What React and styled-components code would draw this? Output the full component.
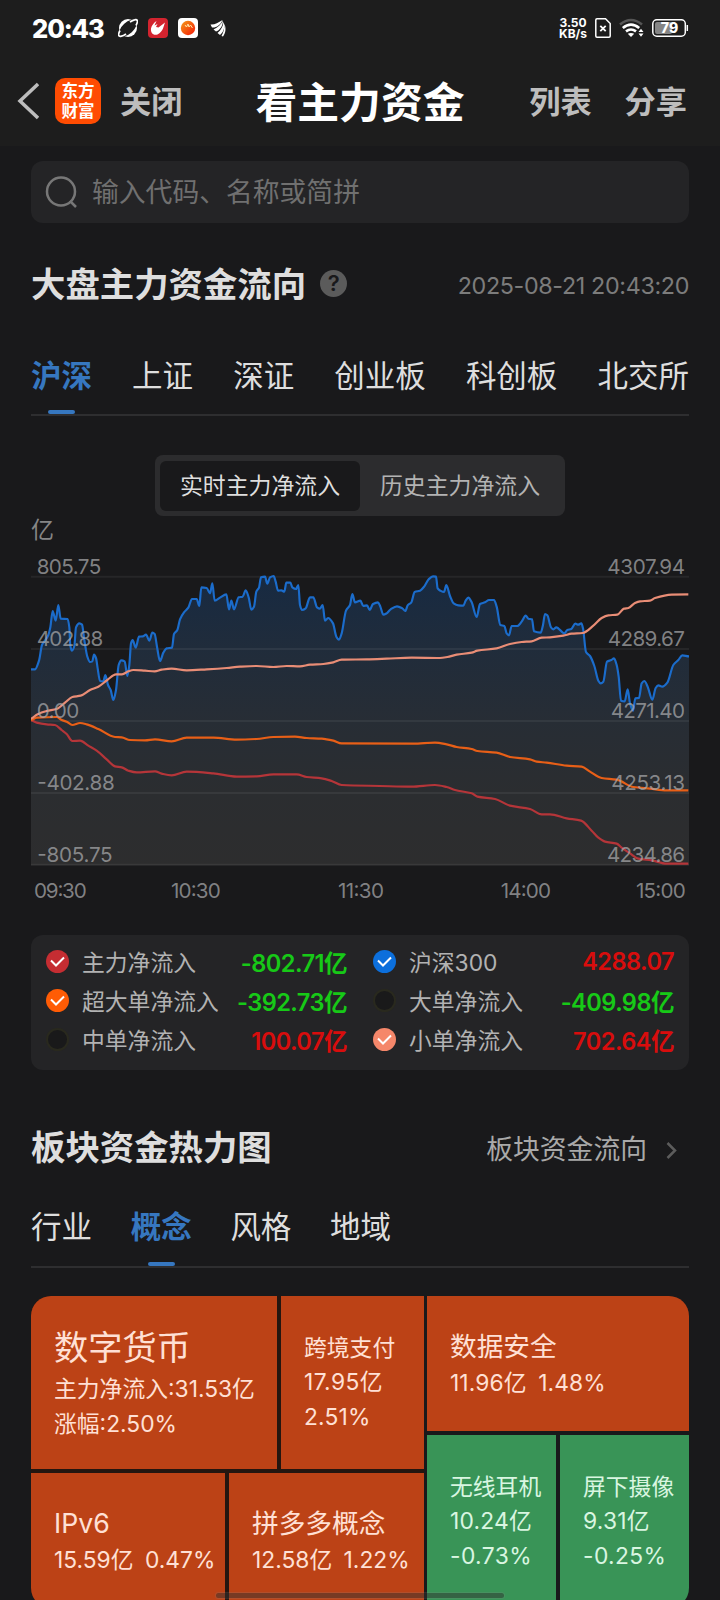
import styled, { createGlobalStyle } from "styled-components";

// STYLES
const GlobalStyle = createGlobalStyle`
  * {
    box-sizing: border-box;
  }
  body {
    margin: 0;
    background: #19191b;
    font-family: Inter, "Noto Sans CJK SC", sans-serif;
  }
`;

const Page = styled.div`
  width: 720px;
  height: 1600px;
  overflow: hidden;
  background: #19191b;
  color: #dedede;
  position: relative;
  white-space: nowrap;
`;

const Header = styled.header`
  height: 146px;
  background: #1d1d1d;
`;

const StatusBar = styled.div`
  display: flex;
  justify-content: space-between;
  align-items: center;
  height: 56px;
  padding: 0 31px 0 32px;
  color: #fff;
`;

const StatusGroup = styled.div`
  display: flex;
  align-items: center;
  gap: ${(props) => props.$gap}px;
`;

const Clock = styled.span`
  width: 76px;
  font-size: 25.5px;
  font-weight: 800;
  letter-spacing: -1.1px;
`;

const NetSpeed = styled.span`
  display: flex;
  flex-direction: column;
  width: 28px;
  font-size: 12px;
  font-weight: 700;
  line-height: 11px;
  text-align: center;
`;

const NavBar = styled.nav`
  display: grid;
  grid-template-columns: 1fr auto 1fr;
  align-items: center;
  height: 90px;
  padding: 0 33px;
`;

const NavSide = styled.div`
  display: flex;
  align-items: center;
  justify-content: ${(props) => (props.$end ? "flex-end" : "flex-start")};
  gap: ${(props) => (props.$end ? 33 : 16)}px;
  margin-left: ${(props) => (props.$end ? 0 : -16)}px;
`;

const NavTitle = styled.h1`
  margin: 4px 0 0;
  color: #fff;
  font-size: 41.8px;
  font-weight: 700;
  line-height: 60px;
`;

const NavText = styled.span`
  margin: 2px 0 0 ${(props) => props.$left || 0}px;
  color: #bdbdbd;
  font-size: 31.2px;
  font-weight: 700;
  line-height: 40px;
`;

const Logo = styled.div`
  width: 46px;
  height: 46px;
  padding-top: 4px;
  border-radius: 10px;
  background: #ff4c02;
  color: #fff;
  font-size: 16.5px;
  font-weight: 700;
  line-height: 19.5px;
  text-align: center;
`;

const Content = styled.main`
  padding: 0 31px;
`;

const SearchBox = styled.div`
  display: flex;
  align-items: center;
  height: 62px;
  margin-top: 15px;
  padding-left: 14px;
  gap: 15px;
  border-radius: 12px;
  background: #242426;
`;

const Placeholder = styled.span`
  margin-bottom: 3px;
  color: #707070;
  font-size: 26.8px;
`;

const Heading = styled.div`
  display: flex;
  align-items: center;
  justify-content: space-between;
  height: ${(props) => props.$height}px;
  margin-top: ${(props) => props.$top || 0}px;
`;

const HeadingTitle = styled.h2`
  display: flex;
  align-items: center;
  gap: 14px;
  margin: 1px 0 0;
  font-size: 34.4px;
  font-weight: 700;
  line-height: 50px;
`;

const HelpDot = styled.span`
  width: 27px;
  height: 27px;
  margin-bottom: 2px;
  border-radius: 50%;
  background: #5b5b5b;
  color: #19191b;
  font-size: 22px;
  font-weight: 600;
  line-height: 27px;
  text-align: center;
`;

const UpdateTime = styled.span`
  margin-top: 2px;
  color: #7c7c7c;
  font-size: 23.3px;
  letter-spacing: -0.35px;
`;

const MoreLink = styled.span`
  display: flex;
  align-items: center;
  gap: 19px;
  padding-right: 12px;
  color: #a9a9a9;
  font-size: 26.8px;

  svg {
    margin-top: 5px;
  }
`;

const Tabs = styled.div`
  display: flex;
  justify-content: ${(props) => (props.$fill ? "space-between" : "flex-start")};
  gap: ${(props) => (props.$fill ? 0 : 38.7)}px;
  height: 71px;
  border-bottom: 2px solid #2e2e30;
  line-height: ${(props) => (props.$fill ? 62 : 59)}px;
`;

const Tab = styled.span`
  position: relative;
  color: ${(props) => (props.$active ? "#3677c0" : "#dedede")};
  font-size: 30.5px;
  font-weight: ${(props) => (props.$active ? 700 : 400)};

  &::after {
    content: "";
    display: ${(props) => (props.$active ? "block" : "none")};
    position: absolute;
    left: calc(50% - 13.5px);
    bottom: 0;
    width: 27px;
    height: 4px;
    border-radius: 2px;
    background: #3677c0;
  }
`;

const Segmented = styled.div`
  display: flex;
  align-items: center;
  width: 410px;
  height: 61px;
  margin: 39px auto 0;
  padding: 0 5px;
  border-radius: 8px;
  background: #2c2c2e;
`;

const Segment = styled.span`
  flex: 1;
  height: 50px;
  border-radius: 6px;
  background: ${(props) => (props.$active ? "#19191b" : "transparent")};
  color: ${(props) => (props.$active ? "#dedede" : "#b3b3b3")};
  font-size: 22.9px;
  line-height: 50px;
  text-align: center;
`;

const Unit = styled.div`
  height: 24px;
  color: #868686;
  font-size: 23px;
  line-height: 28px;
`;

const ChartSvg = styled.svg`
  display: block;
  overflow: visible;

  text {
    fill: #aaabad;
    fill-opacity: 0.72;
    font-size: 62px;
  }
`;

const Legend = styled.div`
  display: grid;
  grid-template-columns: 301px 301px;
  grid-auto-rows: 39px;
  column-gap: 26px;
  height: 135px;
  margin-top: 25px;
  padding: 7px 15px;
  border-radius: 12px;
  background: #242426;
`;

const LegendItem = styled.div`
  display: flex;
  align-items: center;
`;

const Check = styled.span`
  display: flex;
  align-items: center;
  justify-content: center;
  width: 23px;
  height: 23px;
  margin-right: 13px;
  border: ${(props) => (props.$color ? "none" : "2px solid #29291e")};
  border-radius: 50%;
  background: ${(props) => props.$color || "#19191a"};
`;

const LegendName = styled.span`
  flex: 1;
  color: #b2b2b2;
  font-size: 22.8px;
`;

const LegendValue = styled.span`
  color: ${(props) => (props.$up ? "#d80d0d" : "#17c917")};
  font-size: 23.6px;
  font-weight: 600;
  letter-spacing: -0.55px;
`;

const HeatMap = styled.div`
  display: flex;
  gap: 3px;
  height: 312px;
  margin-top: 28px;
  border-radius: 20px;
  overflow: hidden;
`;

const HeatColumn = styled.div`
  display: grid;
  grid-template-rows: ${(props) => props.$rows};
  row-gap: 4px;
  width: ${(props) => props.$width}px;
  background: ${(props) => props.$bg || "none"};
`;

const HeatRow = styled.div`
  display: grid;
  grid-template-columns: ${(props) => props.$cols || "1fr"};
  column-gap: 4px;
`;

const Tile = styled.div`
  display: flex;
  flex-direction: column;
  justify-content: center;
  padding-left: 23px;
  background: ${(props) => (props.$down ? "#399457" : "#bc4216")};
  color: ${(props) => (props.$down ? "#d9f6e1" : "#ffe0d5")};
`;

const TileName = styled.span`
  font-size: ${(props) => props.$size}px;
  line-height: ${(props) => props.$line}px;
`;

const TileText = styled.span`
  font-size: 22.8px;
  line-height: 34.5px;
  letter-spacing: ${(props) => props.$spacing || 0}px;
  word-spacing: 5px;
`;

const HomeBar = styled.div`
  position: absolute;
  left: 216px;
  bottom: 2px;
  width: 288px;
  height: 5px;
  border-radius: 3px;
  background: rgba(50, 50, 50, 0.5);
  box-shadow: 0 0 1px 1px rgba(140, 140, 140, 0.2);
`;
//END STYLES

// Points live on a 1974 x 1110 canvas, y grows downwards
const indexLine = [
  [0, 388], [12, 388], [24, 362], [33, 315], [42, 302], [52, 285], [58, 262], [65, 213], [74, 242], [82, 195],
  [89, 236], [110, 237], [115, 262], [118, 318], [123, 332], [130, 318], [135, 262], [145, 250], [153, 254],
  [160, 300], [169, 350], [177, 366], [184, 364], [189, 344], [195, 354], [200, 385], [207, 423], [217, 424],
  [223, 405], [231, 435], [239, 450], [247, 480], [255, 450], [263, 375], [271, 361], [281, 364], [289, 408],
  [295, 375], [300, 310], [305, 300], [314, 323], [324, 290], [335, 289], [345, 284], [355, 302], [364, 278],
  [371, 282], [378, 320], [387, 363], [397, 338], [407, 325], [423, 323], [429, 282], [439, 270], [447, 238],
  [459, 217], [472, 203], [483, 177], [497, 177], [505, 198], [511, 142], [527, 144], [537, 160], [544, 130],
  [551, 182], [567, 173], [586, 163], [594, 208], [601, 182], [609, 208], [623, 172], [635, 170], [644, 151],
  [653, 172], [661, 209], [669, 200], [676, 155], [684, 143], [690, 112], [702, 110], [709, 131], [717, 112],
  [728, 108], [734, 125], [741, 152], [751, 151], [760, 155], [766, 128], [778, 128], [784, 142], [795, 147],
  [802, 135], [807, 195], [813, 210], [824, 205], [837, 172], [847, 172], [858, 202], [867, 206], [875, 195],
  [882, 242], [891, 234], [906, 250], [916, 290], [924, 299], [932, 280], [945, 212], [957, 195], [964, 162],
  [972, 187], [988, 182], [997, 198], [1008, 196], [1016, 210], [1026, 192], [1041, 187], [1048, 200],
  [1057, 224], [1067, 220], [1079, 208], [1098, 199], [1114, 205], [1123, 213], [1130, 196], [1141, 187],
  [1151, 156], [1167, 152], [1180, 139], [1193, 118], [1206, 109], [1215, 110], [1220, 145], [1228, 152],
  [1239, 156], [1246, 135], [1257, 168], [1268, 190], [1282, 196], [1297, 197], [1304, 182], [1312, 173],
  [1322, 187], [1337, 231], [1347, 192], [1362, 187], [1374, 180], [1389, 180], [1397, 200], [1408, 255],
  [1420, 258], [1427, 280], [1434, 286], [1442, 258], [1459, 258], [1472, 245], [1484, 227], [1492, 236],
  [1503, 238], [1509, 274], [1529, 278], [1536, 255], [1542, 222], [1549, 226], [1560, 262], [1567, 268],
  [1576, 262], [1600, 280], [1609, 270], [1621, 267], [1633, 251], [1642, 254], [1651, 250], [1656, 265],
  [1665, 336], [1677, 348], [1690, 378], [1702, 422], [1709, 430], [1717, 425], [1728, 365], [1741, 360],
  [1749, 355], [1757, 375], [1763, 410], [1770, 482], [1781, 484], [1790, 448], [1797, 490], [1806, 512],
  [1813, 475], [1824, 474], [1832, 430], [1840, 423], [1850, 440], [1864, 479], [1874, 444], [1882, 436],
  [1894, 440], [1909, 428], [1927, 375], [1942, 360], [1954, 346], [1974, 349],
];

const smallLine = [
  [0, 536], [17, 524], [47, 513], [77, 507], [102, 488], [124, 471], [149, 467], [177, 450], [202, 440],
  [229, 420], [255, 403], [273, 403], [292, 394], [307, 390], [342, 392], [371, 394], [392, 389], [422, 386],
  [467, 391], [527, 388], [587, 384], [627, 380], [677, 378], [727, 381], [767, 378], [807, 379], [837, 374],
  [877, 372], [907, 367], [932, 359], [1007, 358], [1067, 356], [1142, 353], [1227, 354], [1249, 351],
  [1277, 344], [1322, 338], [1339, 332], [1397, 325], [1437, 312], [1472, 306], [1502, 304], [1532, 293],
  [1557, 292], [1597, 287], [1622, 281], [1655, 279], [1687, 257], [1712, 234], [1732, 226], [1759, 224],
  [1779, 206], [1792, 204], [1812, 189], [1827, 184], [1857, 182], [1872, 174], [1922, 164], [1972, 163],
];

const hugeLine = [
  [0, 540], [17, 533], [77, 531], [92, 540], [107, 545], [124, 555], [147, 549], [167, 553], [202, 567],
  [252, 591], [272, 592], [297, 600], [342, 601], [372, 598], [422, 604], [467, 593], [547, 593], [617, 599],
  [677, 597], [727, 591], [792, 590], [827, 594], [872, 596], [907, 602], [932, 610], [1147, 611],
  [1212, 608], [1247, 613], [1277, 621], [1322, 627], [1339, 633], [1397, 638], [1437, 651], [1497, 658],
  [1517, 665], [1547, 668], [1607, 677], [1652, 680], [1677, 695], [1712, 714], [1757, 719], [1807, 741],
  [1857, 746], [1907, 751], [1972, 751],
];

const mainLine = [
  [0, 541], [17, 548], [47, 553], [72, 555], [92, 570], [107, 582], [124, 603], [147, 602], [172, 617],
  [197, 632], [227, 658], [252, 679], [272, 682], [292, 692], [317, 697], [372, 694], [392, 701], [422, 706],
  [467, 695], [547, 700], [617, 710], [677, 709], [727, 703], [797, 703], [827, 711], [872, 715], [902, 723],
  [932, 735], [1047, 738], [1142, 740], [1212, 735], [1247, 741], [1272, 750], [1322, 760], [1339, 770],
  [1392, 777], [1437, 797], [1497, 807], [1532, 823], [1557, 823], [1607, 835], [1650, 842], [1682, 872],
  [1702, 893], [1722, 905], [1757, 911], [1772, 923], [1797, 940], [1822, 956], [1862, 961], [1907, 971],
  [1972, 971],
];

const gridRows = [
  { y: 110, left: "805.75", leftWidth: 194, right: "4307.94", rightWidth: 233 },
  { y: 327, left: "402.88", leftWidth: 200, right: "4289.67", rightWidth: 232 },
  { y: 543, left: "0.00", leftWidth: 128, right: "4271.40", rightWidth: 223 },
  { y: 759, left: "-402.88", leftWidth: 232, right: "4253.13", rightWidth: 221 },
  { y: 974, left: "-805.75", leftWidth: 226, right: "4234.86", rightWidth: 234 },
];

const times = [
  { x: 9, label: "09:30", width: 158 },
  { x: 420, label: "10:30", width: 149 },
  { x: 921, label: "11:30", width: 138 },
  { x: 1409, label: "14:00", width: 151 },
  { x: 1815, label: "15:00", width: 149 },
];

const legend = [
  { name: "主力净流入", value: "-802.71亿", color: "#c52d32" },
  { name: "沪深300", value: "4288.07", color: "#0c6fdc", up: true },
  { name: "超大单净流入", value: "-392.73亿", color: "#ff5c05" },
  { name: "大单净流入", value: "-409.98亿" },
  { name: "中单净流入", value: "100.07亿", up: true },
  { name: "小单净流入", value: "702.64亿", color: "#f5876a", up: true },
];

// cubic through the points, slopes flattened at every local peak
const toPath = (points) => {
  const slopes = points.map((p, i) => {
    const prev = points[i - 1];
    const next = points[i + 1];
    if (!prev || !next) return 0;
    const a = (p[1] - prev[1]) / (p[0] - prev[0]);
    const b = (next[1] - p[1]) / (next[0] - p[0]);
    return a * b <= 0 ? 0 : (2 * a * b) / (a + b);
  });
  return points.reduce((d, p, i) => {
    if (i === 0) return `M${p[0]} ${p[1]}`;
    const prev = points[i - 1];
    const h = (p[0] - prev[0]) / 3;
    return `${d}C${prev[0] + h} ${prev[1] + slopes[i - 1] * h} ${p[0] - h} ${p[1] - slopes[i] * h} ${p[0]} ${p[1]}`;
  }, "");
};

function StatusIcons() {
  return (
    <StatusGroup $gap={10}>
      <svg width="20" height="20" viewBox="0 0 20 20">
        <circle cx="10" cy="10" r="9" fill="#fff" />
        <ellipse cx="10" cy="10" rx="10.500" ry="5.600" transform="rotate(-42 10 10)" fill="#1d1d1d" />
        <path
          d="M2 12.500C-.4 17 .2 19 3.500 18.200C5 17.900 6.500 17 8 16M18 7.500C20.400 3 19.800 1 16.500 1.800C15 2.100 13.500 3 12 4"
          fill="none"
          stroke="#fff"
          strokeWidth="1.700"
        />
      </svg>
      <svg width="20" height="20" viewBox="0 0 20 20">
        <rect width="20" height="20" rx="4" fill="#d3242f" />
        <path
          d="M8.500 3L6.500 7.500L9.500 6L8 9L10.500 9.500L17 4.500C15.500 8 15.500 13.500 9.500 16.500C5 18 2.500 14.500 3 10.500C3.700 7.500 5.500 5 8.500 3Z"
          fill="#fff"
        />
      </svg>
      <svg width="20" height="20" viewBox="0 0 20 20">
        <defs>
          <linearGradient id="ball" x1="0" y1="0" x2="1" y2="1">
            <stop offset="0" stopColor="#f49b18" />
            <stop offset="1" stopColor="#f31708" />
          </linearGradient>
        </defs>
        <rect width="20" height="20" rx="4" fill="#fff" />
        <circle cx="10" cy="10" r="7.200" fill="url(#ball)" />
        <path d="M7 7L8.500 9L10 6L11 9L12.500 7L14.500 10" fill="none" stroke="#ffe6a8" strokeWidth="1" />
      </svg>
      <svg width="20" height="20" viewBox="0 0 20 20" fill="#fff">
        <path d="M2.500 6.500C6.500 7 10 4.500 14.500 2C12.500 7 8 10 4 9.500Z" />
        <path d="M5.500 11.500C10 9.500 13 6.500 15 2.500C15 8 11.500 12.500 8 13.500Z" />
        <path d="M9.500 15C13 12 15 8.500 15.500 4C17.500 9 15.500 14 12 17Z" />
        <path d="M13.500 18C15.500 14 16.500 11 16.300 6C18.500 10 17.500 15.500 15 18.500Z" />
      </svg>
    </StatusGroup>
  );
}

function SystemIcons() {
  return (
    <>
      <svg width="16" height="20" viewBox="0 0 16 20" fill="none" stroke="#fff">
        <path d="M2 .8H10.500L15.200 5.500V18Q15.200 19.200 14 19.200H2Q.8 19.200 .8 18V2Q.8 .8 2 .8Z" strokeWidth="1.500" />
        <path d="M5.300 7.800L10.700 13.200M10.700 7.800L5.300 13.200" strokeWidth="1.800" />
      </svg>
      <svg width="25" height="20" viewBox="0 0 25 20" fill="none" strokeWidth="2.600">
        <path d="M1 6.500Q12 -2.500 23 6.500" stroke="#555" />
        <path d="M3.800 10Q12 3.200 20.200 10" stroke="#fff" />
        <path d="M7 13.400Q12 9.600 17 13.400" stroke="#fff" />
        <path d="M8.800 15.800Q12 14 15.200 15.800L12 19Z" fill="#fff" />
        <path d="M19.500 14L22 10.700L24.500 14ZM19.500 15.500L22 18.800L24.500 15.500Z" fill="#fff" />
      </svg>
      <svg width="37" height="18" viewBox="0 0 37 18">
        <rect x=".8" y=".8" width="32.500" height="16.400" rx="4" fill="none" stroke="#fff" strokeWidth="1.500" />
        <rect x="3" y="3" width="17" height="12" rx="2" fill="#858585" />
        <path d="M35.300 6V12" stroke="#fff" strokeWidth="1.500" />
        <text x="17.500" y="14" fill="#fff" fontSize="14" fontWeight="800" textAnchor="middle">
          79
        </text>
      </svg>
    </>
  );
}

function FlowChart() {
  const indexPath = toPath(indexLine);
  return (
    <ChartSvg width="658" height="370" viewBox="0 0 1974 1110">
      <defs>
        <linearGradient id="area" gradientUnits="userSpaceOnUse" x1="0" y1="108" x2="0" y2="976">
          <stop offset="0" stopColor="#172a42" />
          <stop offset="0.25" stopColor="#202c3b" />
          <stop offset="0.5" stopColor="#272d35" />
          <stop offset="0.75" stopColor="#2b2d30" />
          <stop offset="1" stopColor="#2d2d2e" />
        </linearGradient>
      </defs>
      <path d={`${indexPath}V976H0Z`} fill="url(#area)" />
      {gridRows.map((row) => (
        <path key={row.y} d={`M0 ${row.y}H1974`} stroke="#fff" strokeOpacity="0.06" strokeWidth="6" />
      ))}
      <g fill="none" strokeWidth="6.500" strokeLinejoin="round">
        <path d={indexPath} stroke="#1b6ccb" />
        <path d={toPath(mainLine)} stroke="#b53539" />
        <path d={toPath(hugeLine)} stroke="#e85f17" />
        <path d={toPath(smallLine)} stroke="#e98d76" />
      </g>
      {gridRows.map((row) => (
        <g key={row.left}>
          <text x={row.left[0] === "-" ? 19 : 17} y={row.y - 9} textLength={row.leftWidth}>
            {row.left}
          </text>
          <text x={1962 - row.rightWidth} y={row.y - 9} textLength={row.rightWidth}>
            {row.right}
          </text>
        </g>
      ))}
      {times.map((time) => (
        <text key={time.label} x={time.x} y="1073" textLength={time.width}>
          {time.label}
        </text>
      ))}
    </ChartSvg>
  );
}

export default function App() {
  return (
    <Page>
      <GlobalStyle />
      <Header>
        <StatusBar>
          <StatusGroup $gap={10}>
            <Clock>20:43</Clock>
            <StatusIcons />
          </StatusGroup>
          <StatusGroup $gap={8}>
            <NetSpeed>
              <span>3.50</span>
              <span>KB/s</span>
            </NetSpeed>
            <SystemIcons />
          </StatusGroup>
        </StatusBar>
        <NavBar>
          <NavSide>
            <svg width="22" height="38" viewBox="0 0 22 38" fill="none" stroke="#bdbdbd" strokeWidth="3.500">
              <path d="M21 2L3 19L21 36" />
            </svg>
            <Logo>
              东方
              <br />
              财富
            </Logo>
            <NavText $left={3}>关闭</NavText>
          </NavSide>
          <NavTitle>看主力资金</NavTitle>
          <NavSide $end>
            <NavText>列表</NavText>
            <NavText>分享</NavText>
          </NavSide>
        </NavBar>
      </Header>

      <Content>
        <SearchBox>
          <svg width="32" height="32" viewBox="0 0 32 32" fill="none" stroke="#777" strokeWidth="2.500">
            <circle cx="16" cy="15.500" r="14" />
            <path d="M25 25L31 31" />
          </svg>
          <Placeholder>输入代码、名称或简拼</Placeholder>
        </SearchBox>

        <Heading $height={122}>
          <HeadingTitle>
            大盘主力资金流向
            <HelpDot>?</HelpDot>
          </HeadingTitle>
          <UpdateTime>2025-08-21 20:43:20</UpdateTime>
        </Heading>

        <Tabs $fill>
          <Tab $active>沪深</Tab>
          <Tab>上证</Tab>
          <Tab>深证</Tab>
          <Tab>创业板</Tab>
          <Tab>科创板</Tab>
          <Tab>北交所</Tab>
        </Tabs>

        <Segmented>
          <Segment $active>实时主力净流入</Segment>
          <Segment>历史主力净流入</Segment>
        </Segmented>
        <Unit>亿</Unit>
        <FlowChart />

        <Legend>
          {legend.map((item) => (
            <LegendItem key={item.name}>
              <Check $color={item.color}>
                {item.color && (
                  <svg width="15" height="12" viewBox="0 0 15 12" fill="none" stroke="#fff" strokeWidth="2">
                    <path d="M1 4.500L6 9.500L14 1.500" />
                  </svg>
                )}
              </Check>
              <LegendName>{item.name}</LegendName>
              <LegendValue $up={item.up}>{item.value}</LegendValue>
            </LegendItem>
          ))}
        </Legend>

        <Heading $height={99} $top={28}>
          <HeadingTitle>板块资金热力图</HeadingTitle>
          <MoreLink>
            板块资金流向
            <svg width="11" height="17" viewBox="0 0 11 17" fill="none" stroke="#5c5c5c" strokeWidth="2.500">
              <path d="M1.500 1L9 8.500L1.500 16" />
            </svg>
          </MoreLink>
        </Heading>

        <Tabs>
          <Tab>行业</Tab>
          <Tab $active>概念</Tab>
          <Tab>风格</Tab>
          <Tab>地域</Tab>
        </Tabs>

        <HeatMap>
          <HeatColumn $width={393} $rows="173px 135px" $bg="#241610">
            <HeatRow $cols="246px 143px">
              <Tile>
                <TileName $size={34.2} $line={48}>数字货币</TileName>
                <TileText>主力净流入:31.53亿</TileText>
                <TileText>涨幅:2.50%</TileText>
              </Tile>
              <Tile>
                <TileName $size={22.8} $line={34.5}>跨境支付</TileName>
                <TileText $spacing={0.4}>17.95亿</TileText>
                <TileText $spacing={0.2}>2.51%</TileText>
              </Tile>
            </HeatRow>
            <HeatRow $cols="194px 195px">
              <Tile>
                <TileName $size={26.7} $line={40}>IPv6</TileName>
                <TileText>15.59亿 0.47%</TileText>
              </Tile>
              <Tile>
                <TileName $size={26.7} $line={40}>拼多多概念</TileName>
                <TileText>12.58亿 1.22%</TileText>
              </Tile>
            </HeatRow>
          </HeatColumn>
          <HeatColumn $width={262} $rows="135px 173px">
            <HeatRow>
              <Tile>
                <TileName $size={26.7} $line={40}>数据安全</TileName>
                <TileText $spacing={0.1}>11.96亿 1.48%</TileText>
              </Tile>
            </HeatRow>
            <HeatRow $cols="1fr 1fr">
              <Tile $down>
                <TileName $size={22.8} $line={34.5}>无线耳机</TileName>
                <TileText $spacing={0.2}>10.24亿</TileText>
                <TileText $spacing={0.4}>-0.73%</TileText>
              </Tile>
              <Tile $down>
                <TileName $size={22.8} $line={34.5}>屏下摄像</TileName>
                <TileText $spacing={0.2}>9.31亿</TileText>
                <TileText $spacing={0.4}>-0.25%</TileText>
              </Tile>
            </HeatRow>
          </HeatColumn>
        </HeatMap>
      </Content>
      <HomeBar />
    </Page>
  );
}
